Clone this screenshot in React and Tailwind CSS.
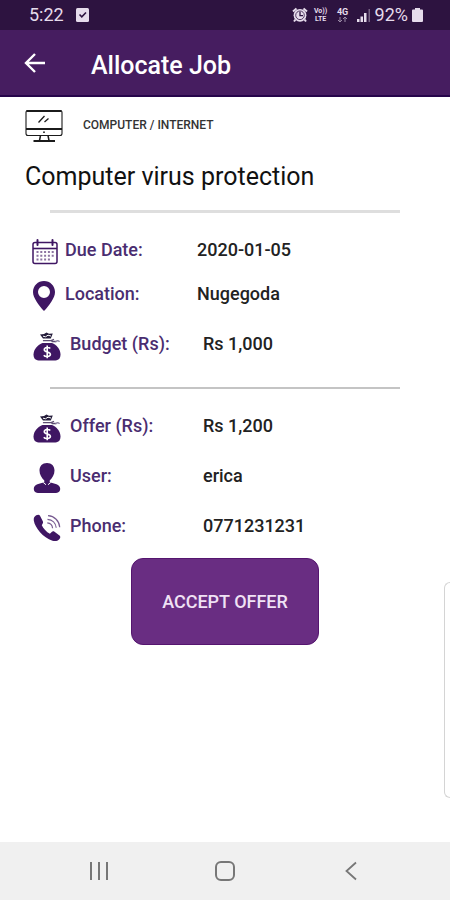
import React from "react";

function CalendarIcon() {
  return (
    <svg width="26" height="26" viewBox="0 0 26 26" fill="none" stroke="currentColor" aria-hidden="true">
      <rect x="1" y="3.500" width="24" height="21" rx="2" strokeWidth="1.500" />
      <path d="M1 9.500H25" strokeWidth="1.600" />
      <path d="M5.500 1V6M20.500 1V6" strokeWidth="2" strokeLinecap="round" />
      <path d="M4.500 13H22M4.500 16.800H22M4.500 20.600H19" strokeWidth="2" strokeDasharray="2 1.800" opacity="0.6" />
    </svg>
  );
}

function PinIcon() {
  return (
    <svg width="24" height="32" viewBox="0 0 24 32" fill="currentColor" aria-hidden="true">
      <path
        fillRule="evenodd"
        d="M12 1C5.900 1 1 5.800 1 12c0 3.200 1.500 6.300 3.500 9.500C6.500 24.700 9.500 28.500 12 31c2.500-2.500 5.500-6.300 7.500-9.500S23 15.200 23 12C23 5.800 18.100 1 12 1Zm0 5a6 6 0 1 1 0 12a6 6 0 0 1 0-12Z"
      />
    </svg>
  );
}

function MoneyBagIcon() {
  return (
    <svg width="28" height="29" viewBox="0 0 28 29" aria-hidden="true">
      <path d="M9.500 11C5 12.500 .5 17.500 .5 22.500C.5 27 3 28.500 7 28.500H21c4 0 6.500-1.500 6.500-6c0-5-4-10-8.500-11.500Z" fill="currentColor" />
      <path d="M7 2.500L11 2L13.500 .5L16 1.700L19.800 1.500L17.800 6.500H10Z" fill="#241c3a" />
      <path d="M10 4.200L12.500 4.800L15 3.200L18 4" stroke="#fff" strokeWidth="1" fill="none" />
      <path d="M10.500 8.700H18L20.500 7.500M19 9.500L22.500 9.500" stroke="#5c4c72" strokeWidth="1.300" fill="none" strokeLinecap="round" />
      <path d="M22.500 10.200C23.500 8 26.300 8.500 26.200 10" stroke="#8d82a0" strokeWidth="1.400" fill="none" />
      <path d="M17.200 16.500C16.200 15 11.300 15 11.300 17.700C11.300 20.500 17.400 19.300 17.400 22.300C17.400 25 12 25 10.800 23.200M14.200 13.500V26.300" stroke="#fff" strokeWidth="1.600" fill="none" />
    </svg>
  );
}

function UserIcon() {
  return (
    <svg width="28" height="32" viewBox="0 0 28 32" fill="currentColor" aria-hidden="true">
      <path d="M14 1C9.300 1 6.500 4 6.500 8.500C6.500 12.500 8.700 16 11.300 18.500V20.500C7 21.500 .8 22 .8 26.800C.8 30 3 31 6 31H22C25 31 27.200 30 27.200 26.800C27.200 22 21 21.500 16.700 20.500V18.500C19.300 16 21.500 12.500 21.500 8.500C21.500 4 18.700 1 14 1Z" />
      <path d="M10.400 20.700L13 22.700M17.600 20.700L15 22.700" stroke="#fff" strokeWidth="1" fill="none" />
    </svg>
  );
}

function PhoneIcon() {
  return (
    <svg width="28" height="28" viewBox="0 0 28 28" fill="none" stroke="currentColor" aria-hidden="true">
      <path
        fill="currentColor"
        stroke="none"
        d="M3.200 1.300C1.500 2.300.4 4.200.8 6.500C2 14 10 23.500 19.500 26.700C22.500 27.700 25.500 26.700 27 24.200C27.500 23.200 27.300 22.300 26.500 21.500L21.500 17.700C20.500 17 19.500 17.100 18.700 17.900L16.900 19.700C13.500 18 10.300 14.500 8.800 11.200L9.600 9.700C10.200 8.800 10.200 7.900 9.700 7L7 1.700C6.300 .4 4.800 .4 3.200 1.300Z"
      />
      <path d="M15 1.700C21.500 2 26.300 7 26.700 13.300M14.500 5.300C19.300 5.600 22.800 9 23.200 13.800M14.300 8.800C17.300 9 19.300 11.200 19.600 14.200" strokeWidth="1.200" opacity=".7" />
    </svg>
  );
}

function MonitorIcon() {
  return (
    <svg width="38" height="34" viewBox="0 0 38 34" fill="none" stroke="#1b1b1b" aria-hidden="true">
      <rect x="1" y="1.500" width="36" height="25" rx="2" strokeWidth="1.100" />
      <path d="M1.500 2H36.500" strokeWidth="2" />
      <path d="M1 20H37" strokeWidth="1.800" />
      <path d="M13.500 13.500L19.500 7M19.500 13L23.500 9.500" strokeWidth="1.300" />
      <circle cx="19" cy="23.200" r=".9" fill="#1b1b1b" stroke="none" />
      <path d="M15.500 26.500L14.500 31.500M23 26.500L24 31.500" strokeWidth="1.500" />
      <path d="M8.500 32H30" strokeWidth="2" />
    </svg>
  );
}

function AlarmIcon() {
  return (
    <svg width="16" height="16" viewBox="0 0 16 16" aria-hidden="true">
      <path d="M1 4.500L4.500 1.500M15 4.500L11.500 1.500M3.500 12.500L2 14.500M12.500 12.500L14 14.500" stroke="currentColor" strokeWidth="2" />
      <circle cx="8" cy="8.300" r="6.400" fill="currentColor" />
      <path d="M8 4.800V8.700H11" stroke="#2d1340" strokeWidth="1.300" fill="none" />
      <circle cx="8" cy="8.300" r="4.300" fill="none" stroke="#2d1340" strokeWidth=".8" />
    </svg>
  );
}

function StatusBar() {
  return (
    <div className="flex h-[30px] items-center justify-between bg-[#2d1340] pr-[27px] pl-[29px] text-[#e6dcec]">
      <div className="flex items-center gap-3">
        <span className="text-[18px] leading-5">5:22</span>
        <svg width="13" height="14" viewBox="0 0 13 14" aria-hidden="true">
          <rect width="13" height="14" rx="1.500" fill="currentColor" />
          <path d="M3.500 6.500L5.800 8.800L10 4.500" stroke="#2d1340" strokeWidth="1.600" fill="none" />
        </svg>
      </div>
      <div className="flex items-center gap-1">
        <AlarmIcon />
        <span className="flex w-[18px] flex-col items-center text-[7px] leading-[8px] font-bold">
          <span>Vo))</span>
          <span>LTE</span>
        </span>
        <span className="flex w-[18px] flex-col items-center text-[9px] leading-[8px] font-bold">
          <span>4G</span>
          <svg width="11" height="7" viewBox="0 0 11 7" fill="none" stroke="currentColor" opacity=".6" aria-hidden="true">
            <path d="M3 1V6M1 4L3 6L5 4M8 6V1M6 3L8 1L10 3" />
          </svg>
        </span>
        <svg width="15" height="14" viewBox="0 0 15 14" fill="currentColor" aria-hidden="true">
          <path d="M1 11H3.500V14H1ZM4.500 8.500H7V14H4.500ZM8 5H10.500V14H8Z" />
          <path d="M12.500 1H14V14H12.500Z" opacity=".4" />
        </svg>
        <span className="text-[18px] leading-5">92%</span>
        <svg width="11" height="14" viewBox="0 0 11 14" fill="currentColor" aria-hidden="true">
          <path d="M3 0H8V1.500H10Q11 1.500 11 2.500V13Q11 14 10 14H1Q0 14 0 13V2.500Q0 1.500 1 1.500H3Z" />
        </svg>
      </div>
    </div>
  );
}

function AppBar() {
  return (
    <header className="flex h-[67px] items-center border-b-2 border-[#26054a] bg-[#461d60] pl-6 text-white">
      <button type="button" aria-label="Back" className="w-[67px]">
        <svg width="22" height="20" viewBox="0 0 22 20" fill="none" stroke="currentColor" strokeWidth="2.400" aria-hidden="true">
          <path d="M21 10H2M11 1L2 10L11 19" />
        </svg>
      </button>
      <h1 className="pt-1.5 text-[25px] leading-8 font-medium">Allocate Job</h1>
    </header>
  );
}

function CompactRow({ icon, label, value }) {
  return (
    <div className="flex h-11 items-center">
      <span className="flex w-[34px] pt-1 pl-px text-[#3f1663]">{icon}</span>
      <dt className="w-[132px] text-[#4a2d70]">{label}</dt>
      <dd>{value}</dd>
    </div>
  );
}

function WideRow({ icon, label, value }) {
  return (
    <div className="flex h-[50px] items-center pl-0.5">
      <span className="flex w-[37px] pt-1 text-[#3f1663]">{icon}</span>
      <dt className="w-[133px] text-[#4a2d70]">{label}</dt>
      <dd>{value}</dd>
    </div>
  );
}

export default function App() {
  return (
    <div className="flex min-h-screen flex-col overflow-hidden bg-white font-[Roboto,sans-serif]">
      <StatusBar />
      <AppBar />
      <main className="relative flex-1">
        <div className="flex items-center gap-5 px-[25px] pt-3">
          <MonitorIcon />
          <span className="pb-[3px] text-[12px] leading-4 font-medium text-[#333]">COMPUTER / INTERNET</span>
        </div>
        <h2 className="mt-[18px] px-[25px] text-[25px] leading-8 text-[#111]">Computer virus protection</h2>
        <hr className="mx-[50px] mt-[17px] border-t-[3px] border-[#dedede]" />
        <dl className="px-[31px] pt-[15px] text-[18px] leading-6 font-medium text-[#222]">
          <CompactRow icon={<CalendarIcon />} label="Due Date:" value="2020-01-05" />
          <CompactRow icon={<PinIcon />} label="Location:" value="Nugegoda" />
          <div className="pt-[3px]">
            <WideRow icon={<MoneyBagIcon />} label="Budget (Rs):" value="Rs 1,000" />
          </div>
        </dl>
        <hr className="mx-[50px] mt-[18px] border-t-2 border-[#c4c4c4]" />
        <dl className="px-[31px] pt-3 text-[18px] leading-6 font-medium text-[#222]">
          <WideRow icon={<MoneyBagIcon />} label="Offer (Rs):" value="Rs 1,200" />
          <WideRow icon={<UserIcon />} label="User:" value="erica" />
          <WideRow icon={<PhoneIcon />} label="Phone:" value="0771231231" />
        </dl>
        <div className="flex justify-center pt-[7px]">
          <button type="button" className="h-[87px] w-[188px] rounded-xl border border-[#55156f] bg-[#692d82] text-[18px] font-medium text-[#f0e2f5]">
            ACCEPT OFFER
          </button>
        </div>
        <div className="absolute right-0 bottom-11 h-[216px] w-1.5 rounded-l-lg border border-r-0 border-[#d4d4d4] bg-white" />
      </main>
      <nav className="flex h-[58px] items-center justify-around bg-[#f0f0f0] px-9 text-[#777]">
        <button type="button" aria-label="Recent apps">
          <svg width="20" height="20" viewBox="0 0 20 20" stroke="currentColor" strokeWidth="2" aria-hidden="true">
            <path d="M2 1V19M10 1V19M18 1V19" />
          </svg>
        </button>
        <button type="button" aria-label="Home">
          <svg width="20" height="20" viewBox="0 0 20 20" fill="none" stroke="currentColor" strokeWidth="2" aria-hidden="true">
            <rect x="1" y="1" width="18" height="18" rx="5" />
          </svg>
        </button>
        <button type="button" aria-label="Back">
          <svg width="20" height="20" viewBox="0 0 20 20" fill="none" stroke="currentColor" strokeWidth="1.800" aria-hidden="true">
            <path d="M15 1.500L5.500 10L15 18.500" />
          </svg>
        </button>
      </nav>
    </div>
  );
}
